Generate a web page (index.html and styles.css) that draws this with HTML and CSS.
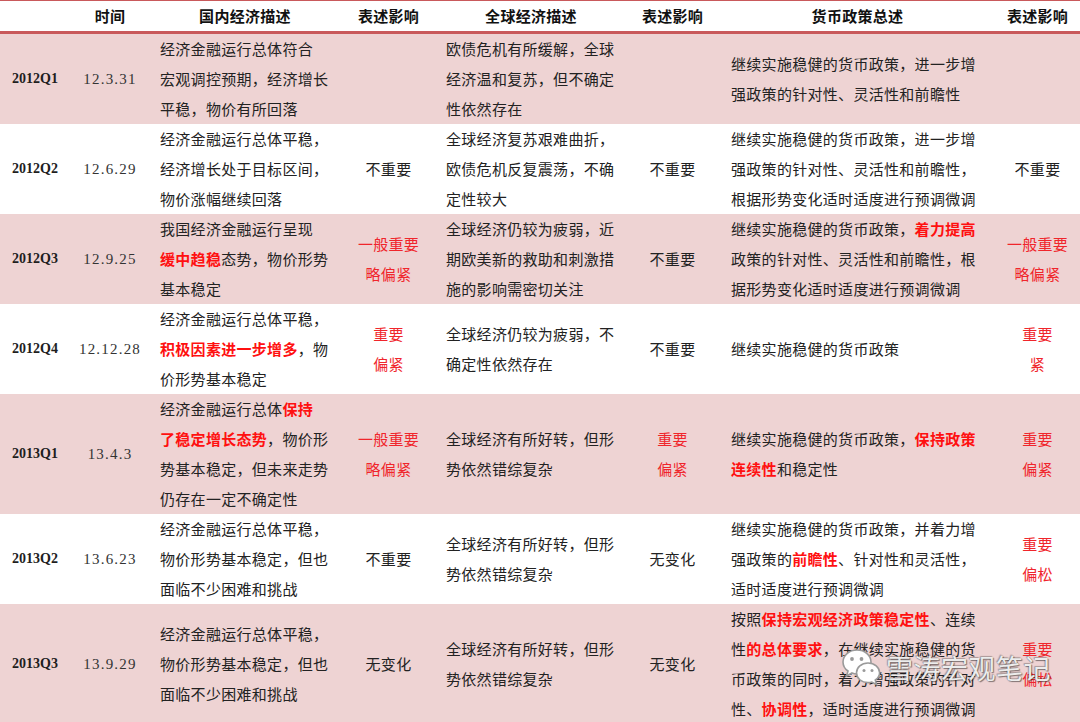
FILE: index.html
```html
<!DOCTYPE html>
<html lang="zh-CN">
<head>
<meta charset="utf-8">
<title>货币政策表述</title>
<link rel="stylesheet" href="styles.css">
</head>
<body>
<div class="wrap">
<table class="grid">
<colgroup>
<col class="c1"><col class="c2"><col class="c3"><col class="c4"><col class="c5"><col class="c6"><col class="c7"><col class="c8">
</colgroup>
<thead>
<tr class="head">
<th></th><th>时间</th><th>国内经济描述</th><th>表述影响</th><th>全球经济描述</th><th>表述影响</th><th>货币政策总述</th><th>表述影响</th>
</tr>
</thead>
<tbody>
<tr class="pink r3">
<td class="q">2012Q1</td><td class="d">12.3.31</td>
<td class="t t3">经济金融运行总体符合<br>宏观调控预期，经济增长<br>平稳，物价有所回落</td>
<td class="m"></td>
<td class="t t5">欧债危机有所缓解，全球<br>经济温和复苏，但不确定<br>性依然存在</td>
<td class="m"></td>
<td class="t t7">继续实施稳健的货币政策，进一步增<br>强政策的针对性、灵活性和前瞻性</td>
<td class="m"></td>
</tr>
<tr class="r3">
<td class="q">2012Q2</td><td class="d">12.6.29</td>
<td class="t t3">经济金融运行总体平稳，<br>经济增长处于目标区间，<br>物价涨幅继续回落</td>
<td class="m">不重要</td>
<td class="t t5">全球经济复苏艰难曲折，<br>欧债危机反复震荡，不确<br>定性较大</td>
<td class="m">不重要</td>
<td class="t t7">继续实施稳健的货币政策，进一步增<br>强政策的针对性、灵活性和前瞻性，<br>根据形势变化适时适度进行预调微调</td>
<td class="m">不重要</td>
</tr>
<tr class="pink r3">
<td class="q">2012Q3</td><td class="d">12.9.25</td>
<td class="t t3">我国经济金融运行呈现<br><b class="hl">缓中趋稳</b>态势，物价形势<br>基本稳定</td>
<td class="m red">一般重要<br>略偏紧</td>
<td class="t t5">全球经济仍较为疲弱，近<br>期欧美新的救助和刺激措<br>施的影响需密切关注</td>
<td class="m">不重要</td>
<td class="t t7">继续实施稳健的货币政策，<b class="hl">着力提高</b><br>政策的针对性、灵活性和前瞻性，根<br>据形势变化适时适度进行预调微调</td>
<td class="m red">一般重要<br>略偏紧</td>
</tr>
<tr class="r3">
<td class="q">2012Q4</td><td class="d">12.12.28</td>
<td class="t t3">经济金融运行总体平稳，<br><b class="hl">积极因素进一步增多</b>，物<br>价形势基本稳定</td>
<td class="m red">重要<br>偏紧</td>
<td class="t t5">全球经济仍较为疲弱，不<br>确定性依然存在</td>
<td class="m">不重要</td>
<td class="t t7">继续实施稳健的货币政策</td>
<td class="m red">重要<br>紧</td>
</tr>
<tr class="pink r4">
<td class="q">2013Q1</td><td class="d">13.4.3</td>
<td class="t t3">经济金融运行总体<b class="hl">保持</b><br><b class="hl">了稳定增长态势</b>，物价形<br>势基本稳定，但未来走势<br>仍存在一定不确定性</td>
<td class="m red">一般重要<br>略偏紧</td>
<td class="t t5">全球经济有所好转，但形<br>势依然错综复杂</td>
<td class="m red">重要<br>偏紧</td>
<td class="t t7">继续实施稳健的货币政策，<b class="hl">保持政策</b><br><b class="hl">连续性</b>和稳定性</td>
<td class="m red">重要<br>偏紧</td>
</tr>
<tr class="r3">
<td class="q">2013Q2</td><td class="d">13.6.23</td>
<td class="t t3">经济金融运行总体平稳，<br>物价形势基本稳定，但也<br>面临不少困难和挑战</td>
<td class="m">不重要</td>
<td class="t t5">全球经济有所好转，但形<br>势依然错综复杂</td>
<td class="m">无变化</td>
<td class="t t7">继续实施稳健的货币政策，并着力增<br>强政策的<b class="hl">前瞻性</b>、针对性和灵活性，<br>适时适度进行预调微调</td>
<td class="m red">重要<br>偏松</td>
</tr>
<tr class="pink r4 last">
<td class="q">2013Q3</td><td class="d">13.9.29</td>
<td class="t t3">经济金融运行总体平稳，<br>物价形势基本稳定，但也<br>面临不少困难和挑战</td>
<td class="m">无变化</td>
<td class="t t5">全球经济有所好转，但形<br>势依然错综复杂</td>
<td class="m">无变化</td>
<td class="t t7">按照<b class="hl">保持宏观经济政策稳定性</b>、连续<br>性<b class="hl">的总体要求</b>，在继续实施稳健的货<br>币政策的同时，着力增强政策的针对<br>性、<b class="hl">协调性</b>，适时适度进行预调微调</td>
<td class="m red">重要<br>偏松</td>
</tr>
</tbody>
</table>

<div class="watermark">
<svg class="wx" width="40" height="38" viewBox="0 0 40 38" aria-hidden="true">
<path d="M15 2 C7 2 1 7.5 1 14 C1 18 3 21 6 23 L4.5 28 L10 25 C11.5 25.6 13.2 26 15 26 C23 26 29 20.5 29 14 C29 7.5 23 2 15 2 Z" fill="#ffffff" stroke="#9a9a9a" stroke-width="1.6"/>
<circle cx="10" cy="11" r="1.9" fill="#9a9a9a"/>
<circle cx="19.5" cy="11" r="1.9" fill="#9a9a9a"/>
<path d="M26 15 C19.5 15 14.5 19.3 14.5 24.8 C14.5 30.3 19.5 34.6 26 34.6 C27.3 34.6 28.6 34.4 29.8 34 L34.5 36.5 L33.3 32 C36 30.2 37.6 27.6 37.6 24.8 C37.6 19.3 32.5 15 26 15 Z" fill="#ffffff" stroke="#9a9a9a" stroke-width="1.6"/>
<circle cx="22" cy="22.5" r="1.5" fill="#9a9a9a"/>
<circle cx="30" cy="22.5" r="1.5" fill="#9a9a9a"/>
</svg>
<span class="wm-text">雪涛宏观笔记</span>
</div>
</div>
</body>
</html>
```

FILE: styles.css
```css
* { box-sizing: border-box; }

html, body {
  margin: 0;
  padding: 0;
  background: #ffffff;
}

body {
  font-family: "Noto Sans CJK SC", "Noto Sans", sans-serif;
  color: #222222;
  width: 1080px;
  height: 722px;
  overflow: hidden;
}

.wrap {
  position: relative;
  width: 1080px;
}

.grid {
  width: 1080px;
  border-collapse: collapse;
  table-layout: fixed;
  font-size: 15px;
  letter-spacing: 0.3px;
}

.c1 { width: 70px; }
.c2 { width: 80px; }
.c3 { width: 190px; }
.c4 { width: 97px; }
.c5 { width: 188px; }
.c6 { width: 95px; }
.c7 { width: 275px; }
.c8 { width: 85px; }

.head th {
  height: 32px;
  padding: 0 0 1px;
  font-weight: 700;
  font-size: 15px;
  color: #111111;
  text-align: center;
  vertical-align: middle;
  border-top: 1px solid #c9595b;
  border-bottom: 3px solid #c9595b;
  background: #ffffff;
}

td {
  padding: 0;
  line-height: 30px;
  vertical-align: middle;
  white-space: nowrap;
}

.r3 td { height: 90px; }
.r4 td { height: 120px; }
.last td { height: 117px; border-bottom: 3px solid #c9595b; }

.pink td { background: #eed3d3; }

.q {
  text-align: center;
  font-family: "Liberation Serif", "Noto Serif CJK SC", serif;
  font-weight: 700;
  font-size: 14px;
  letter-spacing: 0;
  color: #1e1e1e;
}

.d {
  text-align: center;
  font-family: "Liberation Serif", "Noto Serif CJK SC", serif;
  font-size: 15px;
  letter-spacing: 1.2px;
  color: #333333;
}

.t { text-align: left; }
.t3 { padding-left: 10px; }
.t5 { padding-left: 9px; }
.t7 { padding-left: 11px; }

.m { text-align: center; }

.red { color: #f0252b; }

.hl {
  color: #ff1010;
  font-weight: 700;
}

.watermark {
  position: absolute;
  left: 842px;
  top: 648px;
  display: flex;
  align-items: center;
  gap: 4px;
}

.wx { display: block; }

.wm-text {
  font-family: "Noto Sans CJK SC", sans-serif;
  font-size: 27px;
  font-weight: 400;
  letter-spacing: 0.5px;
  color: rgba(255, 255, 255, 0.88);
  text-shadow: 0 0 1px #6a6a6a, 1px 1px 1px rgba(0, 0, 0, 0.45), -1px -1px 1px rgba(0, 0, 0, 0.25);
  line-height: 1;
}
```
